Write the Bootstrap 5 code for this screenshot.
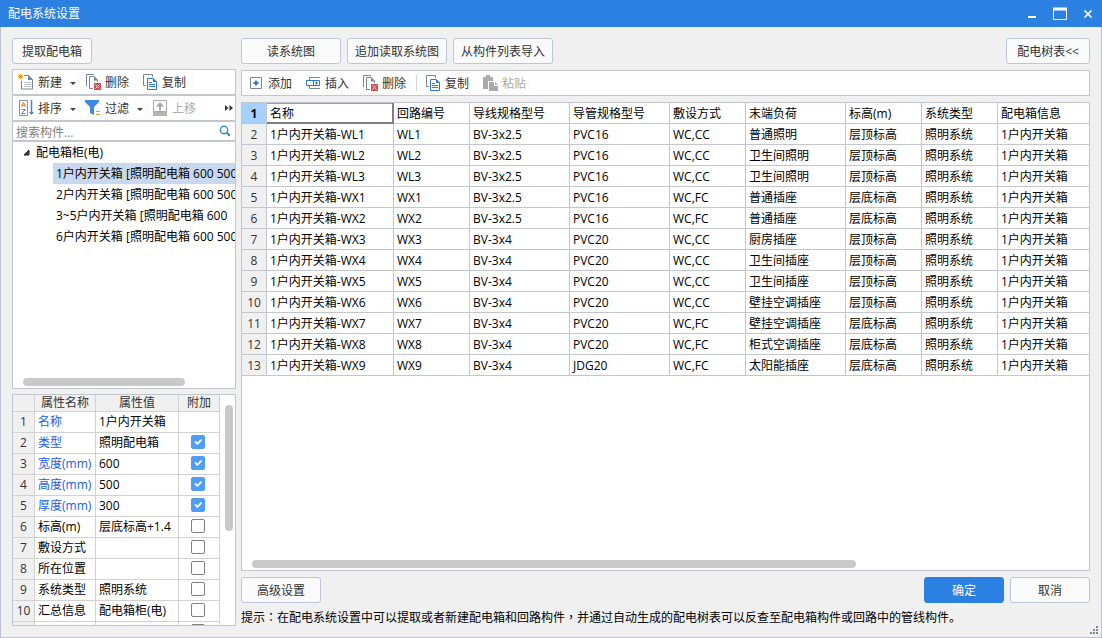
<!DOCTYPE html>
<html lang="zh-CN">
<head>
<meta charset="utf-8">
<meta name="viewport" content="width=device-width, initial-scale=1">
<title>配电系统设置</title>
<link href="https://cdn.jsdelivr.net/npm/bootstrap@5.3.0/dist/css/bootstrap.min.css" rel="stylesheet">
<style>
  :root { --line: #c3c6cd; --edge: #b9c4d8; --face: #f0f0f0; --brand: #2c80e2; }
  body { font: 12px/18px "Open Sans", "Noto Sans CJK SC", sans-serif; color: #000; background: var(--face); }
  .window { height: 100vh; }
  .titlebar { height: 27px; background: var(--brand); color: #fff; padding: 0 9px 0 8px; }
  .titlebar button { border: 0; background: none; color: #fff; padding: 0; display: flex; }
  .client { border: 1px solid var(--edge); border-top: 0; padding: 11px 11px 10px; gap: 5px; min-height: 0; }
  .side { width: 224px; padding-bottom: 1px; }
  .main { min-width: 0; }
  .top-actions { gap: 6px; }
  .main-foot { padding-top: 6px; gap: 6px; }
  .btn-app { --bs-btn-font-size: 12px; --bs-btn-line-height: 18px; --bs-btn-padding-y: 0; --bs-btn-padding-x: 0;
    --bs-btn-border-radius: 3px; --bs-btn-bg: #fafafa; --bs-btn-color: #333; --bs-btn-border-color: #bcc6da;
    --bs-btn-hover-bg: #fff; --bs-btn-hover-color: #333; --bs-btn-hover-border-color: #8fb4e8;
    height: 26px; width: 80px; padding-top: 2px; }
  .btn-wide { width: 100px; }
  .btn-tree { width: 84px; }
  .btn-ok { --bs-btn-bg: #2c80e2; --bs-btn-color: #fff; --bs-btn-border-color: #2c80e2; }
  .pane { background: #fff; border: 1px solid var(--line); }
  .tools { height: 26px; padding: 0 1px; gap: 2px; color: #333; }
  .tools-side { margin-top: 5px; }
  .tools-main { gap: 5px; margin-top: 6px; }
  .tool { display: flex; align-items: center; gap: 4px; height: 22px; padding: 2px 7px 0 4px; border: 0; border-radius: 3px;
    background: #fff; color: #333; white-space: nowrap; box-shadow: inset 0 0 0 1px #fafafa; }
  .tool svg { margin-bottom: 2px; }
  .tools-main .tool { padding: 2px 3px 0 5px; }
  .tool:disabled { color: #aaa; }
  .tools .tool-drop { padding-right: 3px; }
  .tool-drop::after { content: ""; margin-left: 4px; border: 3px solid transparent; border-top-color: #444; border-bottom: 0; }
  .more { margin-right: 1px; }
  .sep { width: 1px; height: 16px; background: #d4d4d4; margin: 0 -2px 0 2px; }
  .search { height: 20px; }
  .search input { border: 0; padding: 2px 3px 0; font-size: 12px; line-height: 16px; min-height: 0; height: 18px; color: #333; background: none; box-shadow: none; }
  .search input::placeholder { color: #808080; }
  .tree li { line-height: 21px; white-space: nowrap; }
  .tree .node { padding-left: 10px; gap: 6px; }
  .tree ul li { margin-left: 40px; padding-left: 3px; overflow: hidden; }
  .tree .picked { background: #c8d8ef; }
  .thumb { background: #c9c9c9; border-radius: 4px; }
  .thumb-x { height: 8px; }
  .thumb-y { width: 8px; height: 126px; margin: 10px 2px 0 5px; }
  .track-x { padding: 0 10px 2px; }
  .sheet-pane { margin-top: 6px; }
  .props-pane { height: 232px; margin-top: 5px; }
  .sheet { table-layout: fixed; border-collapse: separate; border-spacing: 0; margin: 0; color: #000; line-height: 18px; }
  .sheet > :not(caption) > * > * { padding: 0 3px; height: 21px; border: 0 solid var(--line); border-width: 0 1px 1px 0;
    white-space: nowrap; overflow: hidden; vertical-align: middle; background: #fff; box-shadow: none; font-weight: 400; color: #000; }
  .sheet > tbody > tr > th { background: var(--face); text-align: center; padding: 0; color: #333; }
  .sheet > tbody > tr > th.current { background: #a5d0ff; font-weight: 700; color: #000; }
  .sheet > tbody > tr > td.cursor { border-color: #808080; box-shadow: inset -1px -1px #808080, inset 0 1px #a0a0a0; }
  .circuits { width: 1002px; }
  .circuits > tbody > tr > * { padding-top: 2px !important; }
  .props { width: 207px; }
  .props > thead > tr > th { height: 17px; text-align: center; background: var(--face); color: #333; line-height: 16px; }
  .props > :not(caption) > * > * { border-color: #d2d2d2; }
  .props > tbody > tr > td.main-prop { color: #1a5cf0; }
  .props > tbody > tr > td:last-child { text-align: center; line-height: 0; padding: 0 5px 2px 3px; }
  .props .form-check-input { width: 14px; height: 14px; margin: 0; border: 1px solid #808080; border-radius: 2px; float: none; }
  .props .form-check-input:checked { background-color: #4f9df7; border-color: #4f9df7; }
  .hint { margin-top: 6px; }
  .punct { font-family: "Noto Sans CJK TC", sans-serif; line-height: 1; }
  .grip { right: 3px; bottom: 3px; }
</style>
</head>
<body>
<div class="window d-flex flex-column">
  <header class="titlebar d-flex align-items-center justify-content-between flex-shrink-0">
    <span>配电系统设置</span>
    <div class="d-flex align-items-center gap-3">
      <button type="button" aria-label="最小化"><svg width="10" height="14"><path d="M1 10h8" stroke="#fff" stroke-width="2"/></svg></button>
      <button type="button" aria-label="最大化"><svg width="14" height="14"><path d="M.5 1v11.500h13V1" fill="none" stroke="#fff"/><path d="M0 2h14" stroke="#fff" stroke-width="3"/></svg></button>
      <button type="button" aria-label="关闭"><svg width="10" height="14"><path d="M1.500 3.500l7 7M8.500 3.500l-7 7" stroke="#fff" stroke-width="1.700"/></svg></button>
    </div>
  </header>

  <div class="client d-flex flex-fill position-relative">
    <aside class="side d-flex flex-column flex-shrink-0">
      <div class="d-flex"><button type="button" class="btn btn-app">提取配电箱</button></div>
      <div class="pane tools tools-side d-flex align-items-center flex-shrink-0">
        <button type="button" class="tool tool-drop"><svg width="16" height="16"><use href="#i-new"/></svg>新建</button>
        <button type="button" class="tool"><svg width="16" height="16"><use href="#i-del"/></svg>删除</button>
        <button type="button" class="tool"><svg width="16" height="16"><use href="#i-copy"/></svg>复制</button>
      </div>
      <div class="pane tools d-flex align-items-center flex-shrink-0">
        <button type="button" class="tool tool-drop"><svg width="16" height="16"><use href="#i-sort"/></svg>排序</button>
        <button type="button" class="tool tool-drop"><svg width="16" height="16"><use href="#i-filter"/></svg>过滤</button>
        <button type="button" class="tool" disabled><svg width="16" height="16"><use href="#i-up"/></svg>上移</button>
        <svg class="more ms-auto flex-shrink-0" width="8" height="6"><path d="M0 0l3.500 3L0 6zM4.500 0L8 3 4.500 6z" fill="#333"/></svg>
      </div>
      <div class="pane search d-flex align-items-center flex-shrink-0">
        <input type="text" class="form-control" placeholder="搜索构件..." aria-label="搜索构件">
        <svg class="me-1 flex-shrink-0" width="12" height="12"><circle cx="5" cy="5" r="3.700" fill="none" stroke="#2a8bc8" stroke-width="1.400"/><path d="M7.800 7.800l3 3" stroke="#2a8bc8" stroke-width="2"/></svg>
      </div>
      <div class="pane flex-fill d-flex flex-column overflow-hidden">
        <ul class="tree list-unstyled mb-0 flex-fill">
          <li><span class="node d-flex align-items-center"><svg width="7" height="7"><path d="M6 1v5H1z" fill="#404040" stroke="#222"/></svg>配电箱柜(电)</span>
            <ul class="list-unstyled">
              <li class="picked">1户内开关箱 [照明配电箱 600 500</li>
              <li>2户内开关箱 [照明配电箱 600 500</li>
              <li>3~5户内开关箱 [照明配电箱 600</li>
              <li>6户内开关箱 [照明配电箱 600 500</li>
            </ul>
          </li>
        </ul>
        <div class="track-x flex-shrink-0"><div class="thumb thumb-x" style="width:80%"></div></div>
      </div>
      <div class="pane props-pane d-flex overflow-hidden flex-shrink-0">
        <div><table class="table sheet props">
          <colgroup><col style="width:22px"><col style="width:61px"><col style="width:83px"><col style="width:41px"></colgroup>
          <thead><tr><th></th><th scope="col">属性名称</th><th scope="col">属性值</th><th scope="col">附加</th></tr></thead>
          <tbody id="props"></tbody>
        </table></div>
        <div class="thumb thumb-y"></div>
      </div>
    </aside>

    <main class="main d-flex flex-column flex-fill">
      <div class="d-flex">
        <div class="d-flex flex-fill top-actions">
          <button type="button" class="btn btn-app btn-wide">读系统图</button>
          <button type="button" class="btn btn-app btn-wide">追加读取系统图</button>
          <button type="button" class="btn btn-app btn-wide">从构件列表导入</button>
        </div>
        <button type="button" class="btn btn-app btn-tree">配电树表&lt;&lt;</button>
      </div>
      <div class="pane tools tools-main d-flex align-items-center flex-shrink-0">
        <button type="button" class="tool"><svg width="16" height="16"><use href="#i-add"/></svg>添加</button>
        <button type="button" class="tool"><svg width="16" height="16"><use href="#i-insert"/></svg>插入</button>
        <button type="button" class="tool"><svg width="16" height="16"><use href="#i-del"/></svg>删除</button>
        <span class="sep"></span>
        <button type="button" class="tool"><svg width="16" height="16"><use href="#i-copy"/></svg>复制</button>
        <button type="button" class="tool" disabled><svg width="16" height="16"><use href="#i-paste"/></svg>粘贴</button>
      </div>
      <div class="pane sheet-pane flex-fill d-flex flex-column overflow-hidden">
        <div class="flex-fill overflow-hidden">
          <table class="table sheet circuits">
            <colgroup><col style="width:25px"><col style="width:127px"><col style="width:76px"><col style="width:100px"><col style="width:100px"><col style="width:76px"><col style="width:100px"><col style="width:76px"><col style="width:76px"><col></colgroup>
            <tbody id="circuits"></tbody>
          </table>
        </div>
        <div class="track-x flex-shrink-0"><div class="thumb thumb-x" style="width:73%"></div></div>
      </div>
      <div class="main-foot d-flex">
        <button type="button" class="btn btn-app me-auto">高级设置</button>
        <button type="button" class="btn btn-app btn-ok">确定</button>
        <button type="button" class="btn btn-app">取消</button>
      </div>
      <p class="hint mb-0">提示<span class="punct" lang="zh-TW">：</span>在配电系统设置中可以提取或者新建配电箱和回路构件<span class="punct" lang="zh-TW">，</span>并通过自动生成的配电树表可以反查至配电箱构件或回路中的管线构件。</p>
    </main>
    <svg class="grip position-absolute" width="8" height="8" fill="#808890"><path d="M6 0h2v2h-2zM3 3h2v2h-2zM6 3h2v2h-2zM0 6h2v2h-2zM3 6h2v2h-2zM6 6h2v2h-2z"/></svg>
  </div>
</div>

<svg class="d-none">
  <symbol id="i-new" viewBox="0 0 16 16"><path d="M6 1.500h4.500l4 4v9.500h-11V7" fill="none" stroke="#7b8793"/><path d="M10 1v5h5z" fill="#7b8793"/><path d="M6 8.500h7M6 10.500h7M6 12.500h7" stroke="#b8bec5"/><path d="M.5.500l4 4M4.500.500l-4 4M2.500 0v5M0 2.500h5" stroke="#f0982c"/></symbol>
  <symbol id="i-del" viewBox="0 0 16 16"><path d="M1.500 12V.500H9" fill="none" stroke="#7b8793"/><path d="M8 14.500H4.500v-12H9l3.500 3.500v2" fill="none" stroke="#7b8793"/><path d="M9 2v4.500h4z" fill="#7b8793"/><path d="M9 9h7v7H9z" fill="#d04a50"/><path d="M10.500 10.500l4 4M14.500 10.500l-4 4" stroke="#fff"/></symbol>
  <symbol id="i-copy" viewBox="0 0 16 16"><path d="M4 11.500H1.500v-11h9V3" fill="none" stroke="#7b8793"/><path d="M5.500 4.500h5.500l3.500 3.500v7.500h-9z" fill="#fff" stroke="#2e78cc"/><path d="M11 4v4h4zM7 8h3v1H7zM7 10h6v1H7zM7 12h6v1H7z" fill="#2e78cc"/></symbol>
  <symbol id="i-sort" viewBox="0 0 16 16"><path d="M1.500.500h8v15h-8z" fill="none" stroke="#8b949e"/><path d="M3.500 7l2-5 2 5M4 5.500h3" fill="none" stroke="#f08030"/><path d="M3.500 9.500h4l-4 4h4" fill="none" stroke="#7b8793"/><path d="M13.500 0v14" stroke="#3d86d8" stroke-width="1.500"/><path d="M11 12h5l-2.500 3z" fill="#3d86d8"/></symbol>
  <symbol id="i-filter" viewBox="0 0 16 16"><path d="M0 0h14v2L9 7v8l-4-2V7L0 2z" fill="#3d8ae0"/><path d="M11 11.500h4M11 14.500h4" stroke="#f0982c"/></symbol>
  <symbol id="i-up" viewBox="0 0 16 16"><path d="M1.500.500h13v11h-13z" fill="none" stroke="#aaa"/><path d="M1 12h14v4H1z" fill="#b4b4b4"/><path d="M8 2l4 4.500H9V10.500H7V6.500H4z" fill="#aaa"/></symbol>
  <symbol id="i-add" viewBox="0 0 16 16"><path d="M2.500 2.500h11v11h-11z" fill="none" stroke="#7b8793"/><path d="M8 5.500v5M5.500 8h5" stroke="#2e78cc" stroke-width="2"/></symbol>
  <symbol id="i-insert" viewBox="0 0 16 16"><path d="M4.500 5V2.500H15M4.500 10.500v3H15" fill="none" stroke="#7b8793"/><path d="M5 5.500H1.500v5H14.500v-5H5M8.500 5.500v5M11.500 6.500v3M10 8h3" fill="none" stroke="#2e78cc"/></symbol>
  <symbol id="i-paste" viewBox="0 0 16 16"><path d="M1 2h3V0h4v2h3v4H6v8H1z" fill="#aaa"/><path d="M7 7h5v4h4v5H7z" fill="#aaa"/><path d="M13 7l3 3h-3z" fill="#aaa"/></symbol>
</svg>

<script src="https://cdn.jsdelivr.net/npm/bootstrap@5.3.0/dist/js/bootstrap.bundle.min.js"></script>
<script>
  const box = '1户内开关箱', sys = '照明系统';
  const circuits = [
    ['名称', '回路编号', '导线规格型号', '导管规格型号', '敷设方式', '末端负荷', '标高(m)', '系统类型', '配电箱信息'],
    ...[
      ['WL1', 'BV-3x2.5', 'PVC16', 'WC,CC', '普通照明', '层顶标高'],
      ['WL2', 'BV-3x2.5', 'PVC16', 'WC,CC', '卫生间照明', '层顶标高'],
      ['WL3', 'BV-3x2.5', 'PVC16', 'WC,CC', '卫生间照明', '层顶标高'],
      ['WX1', 'BV-3x2.5', 'PVC16', 'WC,FC', '普通插座', '层底标高'],
      ['WX2', 'BV-3x2.5', 'PVC16', 'WC,FC', '普通插座', '层底标高'],
      ['WX3', 'BV-3x4', 'PVC20', 'WC,CC', '厨房插座', '层顶标高'],
      ['WX4', 'BV-3x4', 'PVC20', 'WC,CC', '卫生间插座', '层顶标高'],
      ['WX5', 'BV-3x4', 'PVC20', 'WC,CC', '卫生间插座', '层顶标高'],
      ['WX6', 'BV-3x4', 'PVC20', 'WC,CC', '壁挂空调插座', '层顶标高'],
      ['WX7', 'BV-3x4', 'PVC20', 'WC,FC', '壁挂空调插座', '层底标高'],
      ['WX8', 'BV-3x4', 'PVC20', 'WC,FC', '柜式空调插座', '层底标高'],
      ['WX9', 'BV-3x4', 'JDG20', 'WC,FC', '太阳能插座', '层底标高']
    ].map(r => [box + '-' + r[0], ...r, sys, box])
  ];
  document.getElementById('circuits').innerHTML = circuits.map((row, i) =>
    `<tr><th scope="row"${i ? '' : ' class="current"'}>${i + 1}</th>` +
    row.map((text, j) => `<td${i + j ? '' : ' class="cursor"'}>${text}</td>`).join('') + '</tr>').join('');

  // name, value, ticked (null: no tick box), primary property
  const props = [
    ['名称', box, null, true], ['类型', '照明配电箱', true, true], ['宽度(mm)', '600', true, true],
    ['高度(mm)', '500', true, true], ['厚度(mm)', '300', true, true], ['标高(m)', '层底标高+1.4', false, false],
    ['敷设方式', '', false, false], ['所在位置', '', false, false], ['系统类型', sys, false, false],
    ['汇总信息', '配电箱柜(电)', false, false], ['', '', false, false]
  ];
  document.getElementById('props').innerHTML = props.map(([name, value, on, main], i) =>
    `<tr><th scope="row">${name ? i + 1 : ''}</th><td${main ? ' class="main-prop"' : ''}>${name}</td><td>${value}</td><td>` +
    (on === null ? '' : `<input type="checkbox" class="form-check-input" aria-label="附加 ${name}"${on ? ' checked' : ''}>`) +
    '</td></tr>').join('');
</script>
</body>
</html>
